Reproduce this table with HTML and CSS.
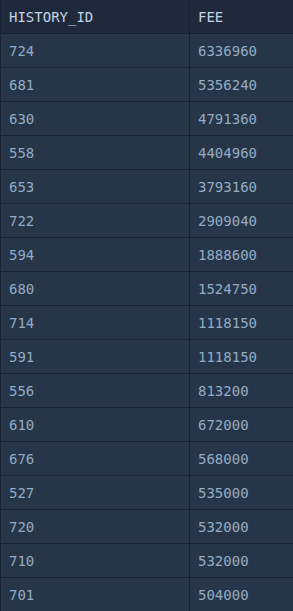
FILE: index.html
```html
<!DOCTYPE html>
<html>
<head>
<meta charset="utf-8">
<link rel="stylesheet" href="styles.css">
</head>
<body>
<table class="grid">
<thead><tr><th>HISTORY_ID</th><th>FEE</th></tr></thead>
<tbody>
<tr><td>724</td><td>6336960</td></tr>
<tr><td>681</td><td>5356240</td></tr>
<tr><td>630</td><td>4791360</td></tr>
<tr><td>558</td><td>4404960</td></tr>
<tr><td>653</td><td>3793160</td></tr>
<tr><td>722</td><td>2909040</td></tr>
<tr><td>594</td><td>1888600</td></tr>
<tr><td>680</td><td>1524750</td></tr>
<tr><td>714</td><td>1118150</td></tr>
<tr><td>591</td><td>1118150</td></tr>
<tr><td>556</td><td>813200</td></tr>
<tr><td>610</td><td>672000</td></tr>
<tr><td>676</td><td>568000</td></tr>
<tr><td>527</td><td>535000</td></tr>
<tr><td>720</td><td>532000</td></tr>
<tr><td>710</td><td>532000</td></tr>
<tr><td>701</td><td>504000</td></tr>
</tbody>
</table>
</body>
</html>
```
FILE: styles.css
```css
html, body {
  margin: 0;
  padding: 0;
  background: #243447;
}
.grid {
  border-collapse: collapse;
  width: 293px;
  font-family: "DejaVu Sans Mono", monospace;
  font-size: 14px;
}
.grid th, .grid td {
  height: 33px;
  padding: 0 0 0 8px;
  text-align: left;
  font-weight: normal;
  border: 1px solid #172130;
  border-top: none;
  border-right: none;
}
.grid th:first-child, .grid td:first-child {
  width: 180px;
}
.grid thead th {
  background: #1e2a3b;
  color: #c5d3e3;
}
.grid tbody td {
  background: #263648;
  color: #94abc3;
}
```
